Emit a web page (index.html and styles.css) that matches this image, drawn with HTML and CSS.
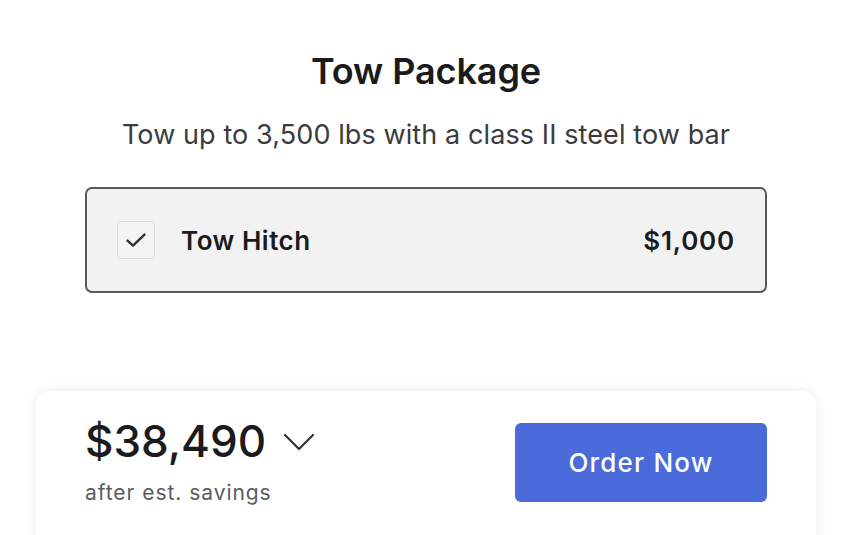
FILE: index.html
```html
<!DOCTYPE html>
<html lang="en">
<head>
  <meta charset="UTF-8" />
  <meta name="viewport" content="width=device-width, initial-scale=1.0"/>
  <title>Tow Package</title>
  <link rel="stylesheet" href="styles.css">
</head>
<body>

<div class="page">
  <section class="package">
    <h1>Tow Package</h1>
    <p class="subtitle">Tow up to 3,500 lbs with a class II steel tow bar</p>

    <label class="option">
      <span class="checkbox">
        <svg width="20" height="20" viewBox="0 0 20 20">
          <path d="M1.5 10.6 L7 15.6 L18.5 4.6" fill="none" stroke="#333" stroke-width="2.4" stroke-linecap="round" stroke-linejoin="round"/>
        </svg>
      </span>
      <span class="option-name">Tow Hitch</span>
      <span class="option-price">$1,000</span>
    </label>
  </section>

  <div class="summary">
    <div class="price-block">
      <div class="price">
        $38,490
        <svg class="chevron" width="32" height="20" viewBox="0 0 32 20">
          <path d="M2 3 L16 17 L30 3" fill="none" stroke="#333" stroke-width="2.2" stroke-linecap="round" stroke-linejoin="round"/>
        </svg>
      </div>
      <div class="price-note">after est. savings</div>
    </div>
    <button class="order-btn">Order Now</button>
  </div>
</div>

</body>
</html>
```

FILE: styles.css
```css
:root {
  --text: #1b1b1d;
  --muted: #5c5c5e;
  --primary: #4a6bd9;
  --option-bg: #f2f2f2;
}

body {
  margin: 0;
  font-family: Inter, "Noto Sans", sans-serif;
  background: #ffffff;
  color: var(--text);
  overflow: hidden;
}

.page {
  width: 852px;
  height: 535px;
  display: flex;
  flex-direction: column;
  align-items: center;
}

.package {
  width: 682px;
  display: flex;
  flex-direction: column;
  align-items: center;
}

h1 {
  margin: 49px 0 0;
  font-size: 36px;
  font-weight: 600;
  letter-spacing: -0.1px;
  line-height: 44px;
}

.subtitle {
  margin: 24px 0 0;
  font-size: 27px;
  line-height: 36px;
  letter-spacing: 0.1px;
  color: #3b3b3d;
}

.option {
  box-sizing: border-box;
  width: 682px;
  height: 106px;
  margin-top: 34px;
  padding: 0 30px;
  display: flex;
  align-items: center;
  background: var(--option-bg);
  border: 2px solid #5a5a5c;
  border-radius: 7px;
}

.checkbox {
  box-sizing: border-box;
  width: 38px;
  height: 38px;
  display: flex;
  align-items: center;
  justify-content: center;
  border: 1.5px solid #dcdcdc;
  border-radius: 4px;
  background: #f4f4f4;
}

.option-name {
  margin-left: 26px;
  font-size: 26px;
  font-weight: 600;
  letter-spacing: 0.5px;
  flex: 1;
}

.option-price {
  font-size: 26px;
  font-weight: 600;
  letter-spacing: 0.8px;
}

.summary {
  box-sizing: border-box;
  width: 780px;
  margin-top: 98px;
  padding: 32px 49px 50px;
  display: flex;
  justify-content: space-between;
  align-items: flex-start;
  background: #ffffff;
  border-radius: 14px;
  box-shadow: 0 0 14px rgba(0,0,0,0.08);
}

.price-block {
  margin-top: -2px;
}

.price {
  display: flex;
  align-items: center;
  font-size: 44px;
  font-weight: 500;
  line-height: 40px;
}

.chevron {
  margin-left: 17px;
  margin-top: 2px;
}

.price-note {
  margin-top: 19px;
  font-size: 21px;
  line-height: 26px;
  letter-spacing: 0.95px;
  color: var(--muted);
}

.order-btn {
  width: 252px;
  height: 79px;
  border: none;
  border-radius: 6px;
  background: var(--primary);
  color: #ffffff;
  font-family: inherit;
  font-size: 26px;
  font-weight: 500;
  letter-spacing: 1.2px;
  cursor: pointer;
}
```
